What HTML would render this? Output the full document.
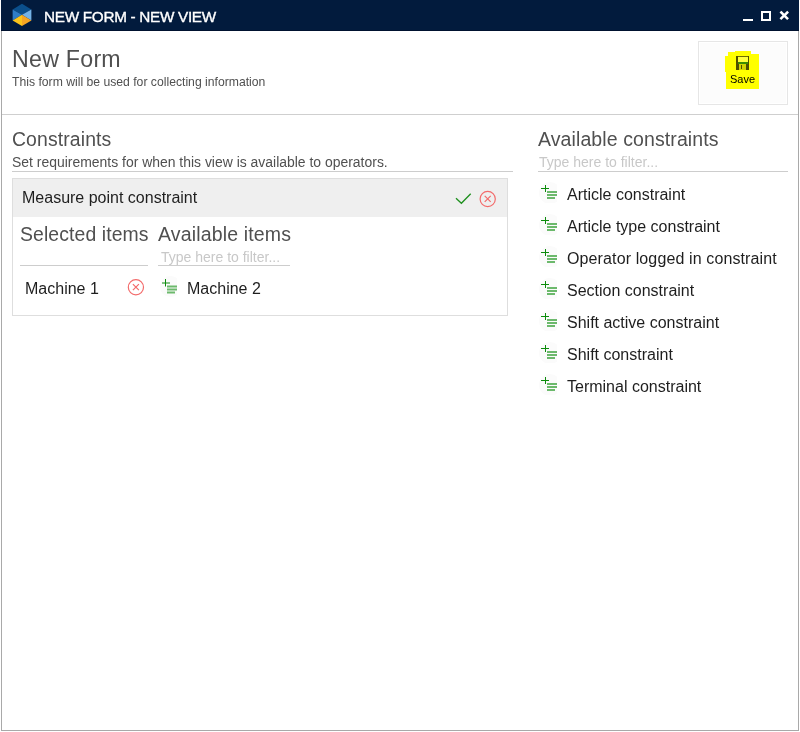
<!DOCTYPE html>
<html><head><meta charset="utf-8">
<style>
html,body{margin:0;padding:0;background:#fff;width:800px;height:732px;overflow:hidden;position:relative;font-family:"Liberation Sans",sans-serif;}
.a{position:absolute;}
.t{position:absolute;white-space:pre;line-height:1;will-change:transform;}
.ln{position:absolute;height:1px;background:#cdcdcd;}
.h{color:#505050;}
.d{color:#1e1e1e;}
.ph{color:#c8c8c8;}
</style></head><body>
<!-- window frame -->
<div class="a" style="left:1px;top:0;width:798px;height:31px;background:#021b3d;"></div>
<div class="a" style="left:1px;top:30px;width:798px;height:1px;background:#00122f;"></div>
<div class="a" style="left:1px;top:31px;width:1px;height:700px;background:#a9a9a9;"></div>
<div class="a" style="left:798px;top:31px;width:1px;height:700px;background:#a9a9a9;"></div>
<div class="a" style="left:1px;top:730px;width:798px;height:1px;background:#a9a9a9;"></div>

<!-- logo -->
<svg class="a" style="left:0;top:0" width="40" height="31" viewBox="0 0 40 31">
<polygon points="22,3.8 31.4,9.6 22,14.7 12.6,9.6" fill="#0b4f8b"/>
<polygon points="12.6,9.6 22,14.7 12.6,20.5" fill="#2f7dc6"/>
<polygon points="31.4,9.6 22,14.7 31.4,20.5" fill="#74b3e6"/>
<polygon points="12.6,20.5 22,14.7 22,26" fill="#fcc51a"/>
<polygon points="22,14.7 31.4,20.5 22,26" fill="#f6a623"/>
</svg>
<div class="t" style="left:44px;top:8.5px;font-size:15.3px;letter-spacing:-0.3px;color:#fff;-webkit-text-stroke:0.35px #fff;">NEW FORM - NEW VIEW</div>

<!-- window buttons -->
<div class="a" style="left:743px;top:19px;width:10px;height:2px;background:#fff;"></div>
<div class="a" style="left:761px;top:11px;width:6px;height:6px;border:2px solid #fff;"></div>
<svg class="a" style="left:776px;top:7px" width="16" height="16" viewBox="0 0 16 16">
<path d="M5.3 5.5 L11.2 11.3 M11.2 5.5 L5.3 11.3" stroke="#fff" stroke-width="2.5" stroke-linecap="square"/>
</svg>
<!-- header -->
<div class="t h" style="left:12px;top:48px;font-size:23.2px;letter-spacing:0.25px;">New Form</div>
<div class="t h" style="left:12px;top:75.7px;font-size:12.2px;">This form will be used for collecting information</div>
<div class="a" style="left:698px;top:41px;width:88px;height:62px;background:#fcfcfc;border:1px solid #e6e6e6;box-shadow:inset 0 0 0 1px #fff;"></div>
<!-- yellow highlight -->
<svg class="a" style="left:720px;top:48px" width="45" height="45" viewBox="0 0 45 45">
<path d="M15 3 H31 V6 H39 V41 H6 V24 H5 V8 H8 V4 H15 Z" fill="#ffff00"/>
<!-- floppy -->
<rect x="16" y="8" width="13" height="1" fill="#6e6e00"/>
<rect x="16" y="8" width="2" height="14" fill="#505000"/>
<rect x="28" y="8" width="1" height="14" fill="#505000"/>
<rect x="18" y="9" width="10" height="5" fill="#ffff3c"/>
<rect x="18" y="14" width="10" height="2" fill="#3a8c00"/>
<rect x="18" y="16" width="1" height="6" fill="#505000"/>
<rect x="26" y="16" width="2" height="6" fill="#505000"/>
<rect x="19" y="16" width="7" height="6" fill="#d2d200"/>
<rect x="21" y="17" width="1" height="4" fill="#505000"/>
</svg>
<div class="t" style="left:730px;top:74px;font-size:11px;color:#000;">Save</div>
<div class="ln" style="left:2px;top:114px;width:796px;background:#cfcfcf;"></div>

<!-- constraints -->
<div class="t h" style="left:12px;top:130.2px;font-size:19.4px;letter-spacing:0.12px;">Constraints</div>
<div class="t h" style="left:12px;top:155.9px;font-size:13.95px;">Set requirements for when this view is available to operators.</div>
<div class="ln" style="left:12px;top:171px;width:501px;"></div>

<div class="a" style="left:12px;top:178px;width:494px;height:136px;border:1px solid #dedede;"></div>
<div class="a" style="left:13px;top:179px;width:494px;height:38px;background:#efefef;"></div>
<div class="t d" style="left:22px;top:190px;font-size:16px;">Measure point constraint</div>
<svg class="a" style="left:450px;top:186px" width="50" height="26" viewBox="0 0 50 26">
<path d="M6 12.2 L11.4 17.3 L20.7 7.7" fill="none" stroke="#1e901e" stroke-width="1.3"/>
<circle cx="37.7" cy="12.95" r="7.6" fill="none" stroke="#f36b6b" stroke-width="1.2"/>
<path d="M34.7 9.95 L40.7 15.95 M40.7 9.95 L34.7 15.95" stroke="#f36b6b" stroke-width="1.2"/>
</svg>

<div class="t h" style="left:20px;top:225.2px;font-size:19.4px;letter-spacing:0.1px;">Selected items</div>
<div class="t h" style="left:158px;top:225.2px;font-size:19.5px;letter-spacing:0.15px;">Available items</div>
<div class="t ph" style="left:161px;top:249.5px;font-size:14px;">Type here to filter...</div>
<div class="ln" style="left:20px;top:265px;width:128px;"></div>
<div class="ln" style="left:158px;top:265px;width:132px;"></div>
<div class="t d" style="left:25px;top:281px;font-size:16px;">Machine 1</div>
<svg class="a" style="left:120px;top:272px" width="30" height="30" viewBox="0 0 30 30">
<circle cx="15.9" cy="15.2" r="7.6" fill="none" stroke="#f36b6b" stroke-width="1.2"/>
<path d="M12.9 12.2 L18.9 18.2 M18.9 12.2 L12.9 18.2" stroke="#f36b6b" stroke-width="1.2"/>
</svg>
<svg class="a" style="left:151px;top:271px" width="26" height="26" viewBox="0 0 26 26">
<circle cx="19.4" cy="15.5" r="10.5" fill="#fbfbfb"/>
<rect x="11" y="11.5" width="8" height="1" fill="#0c8c0c"/>
<rect x="14" y="8" width="1" height="7.5" fill="#0c8c0c"/>
<rect x="16" y="14.5" width="10" height="2" fill="#6cb96c"/>
<rect x="16" y="17.5" width="10" height="2" fill="#6cb96c"/>
<rect x="16" y="20.5" width="8" height="2" fill="#6cb96c"/>
</svg>
<div class="t d" style="left:187px;top:281px;font-size:16px;">Machine 2</div>

<!-- available constraints -->
<div class="t h" style="left:538px;top:130.0px;font-size:19.5px;letter-spacing:0.1px;">Available constraints</div>
<div class="t ph" style="left:539px;top:154.9px;font-size:14px;">Type here to filter...</div>
<div class="ln" style="left:538px;top:171px;width:250px;"></div>

<svg class="a" style="left:531px;top:177px" width="26" height="26" viewBox="0 0 26 26">
<circle cx="19" cy="16" r="11" fill="#fbfbfb"/>
<rect x="10" y="11" width="8" height="1" fill="#0c8c0c"/>
<rect x="14" y="8" width="1" height="7" fill="#0c8c0c"/>
<rect x="16" y="14" width="10" height="2" fill="#6cb96c"/>
<rect x="16" y="17" width="10" height="2" fill="#6cb96c"/>
<rect x="16" y="20" width="8" height="2" fill="#6cb96c"/>
</svg>
<div class="t d" style="left:567px;top:187px;font-size:16px;">Article constraint</div>
<svg class="a" style="left:531px;top:209px" width="26" height="26" viewBox="0 0 26 26">
<circle cx="19" cy="16" r="11" fill="#fbfbfb"/>
<rect x="10" y="11" width="8" height="1" fill="#0c8c0c"/>
<rect x="14" y="8" width="1" height="7" fill="#0c8c0c"/>
<rect x="16" y="14" width="10" height="2" fill="#6cb96c"/>
<rect x="16" y="17" width="10" height="2" fill="#6cb96c"/>
<rect x="16" y="20" width="8" height="2" fill="#6cb96c"/>
</svg>
<div class="t d" style="left:567px;top:219px;font-size:16px;">Article type constraint</div>
<svg class="a" style="left:531px;top:241px" width="26" height="26" viewBox="0 0 26 26">
<circle cx="19" cy="16" r="11" fill="#fbfbfb"/>
<rect x="10" y="11" width="8" height="1" fill="#0c8c0c"/>
<rect x="14" y="8" width="1" height="7" fill="#0c8c0c"/>
<rect x="16" y="14" width="10" height="2" fill="#6cb96c"/>
<rect x="16" y="17" width="10" height="2" fill="#6cb96c"/>
<rect x="16" y="20" width="8" height="2" fill="#6cb96c"/>
</svg>
<div class="t d" style="left:567px;top:251px;font-size:16px;letter-spacing:0.12px;">Operator logged in constraint</div>
<svg class="a" style="left:531px;top:273px" width="26" height="26" viewBox="0 0 26 26">
<circle cx="19" cy="16" r="11" fill="#fbfbfb"/>
<rect x="10" y="11" width="8" height="1" fill="#0c8c0c"/>
<rect x="14" y="8" width="1" height="7" fill="#0c8c0c"/>
<rect x="16" y="14" width="10" height="2" fill="#6cb96c"/>
<rect x="16" y="17" width="10" height="2" fill="#6cb96c"/>
<rect x="16" y="20" width="8" height="2" fill="#6cb96c"/>
</svg>
<div class="t d" style="left:567px;top:283px;font-size:16px;">Section constraint</div>
<svg class="a" style="left:531px;top:305px" width="26" height="26" viewBox="0 0 26 26">
<circle cx="19" cy="16" r="11" fill="#fbfbfb"/>
<rect x="10" y="11" width="8" height="1" fill="#0c8c0c"/>
<rect x="14" y="8" width="1" height="7" fill="#0c8c0c"/>
<rect x="16" y="14" width="10" height="2" fill="#6cb96c"/>
<rect x="16" y="17" width="10" height="2" fill="#6cb96c"/>
<rect x="16" y="20" width="8" height="2" fill="#6cb96c"/>
</svg>
<div class="t d" style="left:567px;top:315px;font-size:16px;">Shift active constraint</div>
<svg class="a" style="left:531px;top:337px" width="26" height="26" viewBox="0 0 26 26">
<circle cx="19" cy="16" r="11" fill="#fbfbfb"/>
<rect x="10" y="11" width="8" height="1" fill="#0c8c0c"/>
<rect x="14" y="8" width="1" height="7" fill="#0c8c0c"/>
<rect x="16" y="14" width="10" height="2" fill="#6cb96c"/>
<rect x="16" y="17" width="10" height="2" fill="#6cb96c"/>
<rect x="16" y="20" width="8" height="2" fill="#6cb96c"/>
</svg>
<div class="t d" style="left:567px;top:347px;font-size:16px;">Shift constraint</div>
<svg class="a" style="left:531px;top:369px" width="26" height="26" viewBox="0 0 26 26">
<circle cx="19" cy="16" r="11" fill="#fbfbfb"/>
<rect x="10" y="11" width="8" height="1" fill="#0c8c0c"/>
<rect x="14" y="8" width="1" height="7" fill="#0c8c0c"/>
<rect x="16" y="14" width="10" height="2" fill="#6cb96c"/>
<rect x="16" y="17" width="10" height="2" fill="#6cb96c"/>
<rect x="16" y="20" width="8" height="2" fill="#6cb96c"/>
</svg>
<div class="t d" style="left:567px;top:379px;font-size:16px;">Terminal constraint</div>

</body></html>
